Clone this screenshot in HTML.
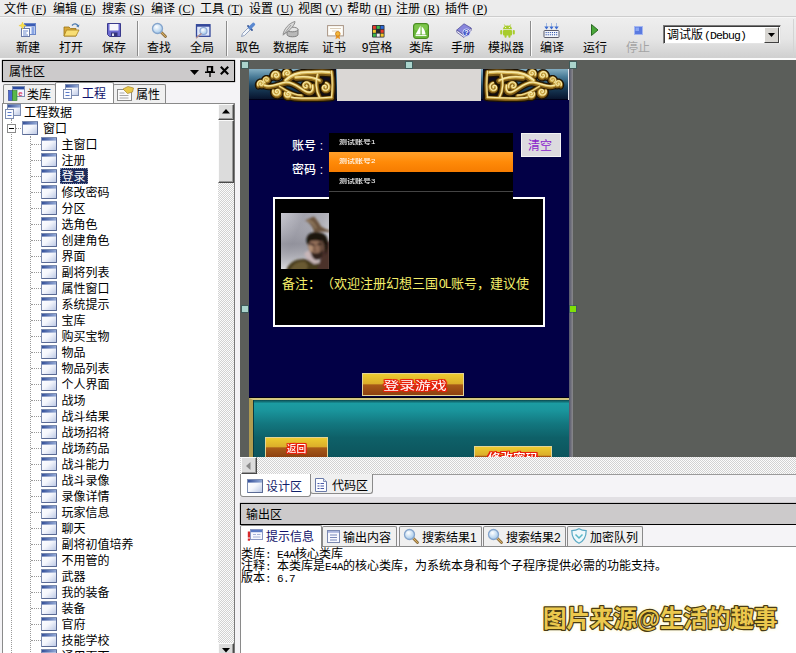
<!DOCTYPE html><html><head><meta charset="utf-8"><title>E4A</title><style>
*{margin:0;padding:0;box-sizing:border-box}
html,body{width:796px;height:653px;overflow:hidden;background:#f0f0f0}
body{position:relative;font-family:"Liberation Sans","Noto Sans CJK SC",sans-serif;font-size:12px;color:#000;line-height:1;text-spacing-trim:space-all;font-weight:400}
.b{font-weight:400}
.a{position:absolute}
.t{position:absolute;white-space:nowrap;line-height:14px;height:14px;margin-top:1px}
.lat{font-family:"Liberation Serif",serif;font-size:12px;letter-spacing:0;margin-left:3.5px;font-weight:400;position:relative;top:-0.5px}
.lat u{text-decoration:underline;text-underline-offset:1px}
.mono{font-family:"Liberation Mono","Noto Sans CJK SC",monospace}
.m{font-family:"Liberation Mono",monospace;font-size:11px;letter-spacing:-0.6px;font-weight:400}
svg{position:absolute;overflow:visible}
.gb{background:linear-gradient(#eecf30 0,#dcae2a 46%,#a85a18 52%,#8a3e10 100%);box-shadow:inset 0 0 0 1px #e4d494}
.gt{color:#fff;font-weight:500;text-shadow:1px 0 0 #e8200c,-1px 0 0 #e8200c,0 1px 0 #e8200c,0 -1px 0 #e8200c,1px 1px 0 #e8200c,-1px -1px 0 #e8200c,1px -1px 0 #e8200c,-1px 1px 0 #e8200c,0 0 2px #e8200c}
</style></head><body>
<svg width="0" height="0" style="left:0;top:0"><defs><linearGradient id="wg" x1="0" y1="0" x2="1" y2="1"><stop offset="0" stop-color="#ffffff"/><stop offset="0.5" stop-color="#f4f6fc"/><stop offset="1" stop-color="#b9c6e4"/></linearGradient><linearGradient id="tb" x1="0" y1="0" x2="1" y2="0"><stop offset="0" stop-color="#34509a"/><stop offset="1" stop-color="#93a9d6"/></linearGradient><linearGradient id="gold" x1="0" y1="0" x2="0" y2="1"><stop offset="0" stop-color="#f6e08a"/><stop offset="0.5" stop-color="#d9b24a"/><stop offset="1" stop-color="#8a6420"/></linearGradient><radialGradient id="glass" cx="0.4" cy="0.35" r="0.7"><stop offset="0" stop-color="#ffffff"/><stop offset="1" stop-color="#9cc4e8"/></radialGradient></defs></svg>
<div class="a" style="left:0;top:0;width:796px;height:17px;background:#ececec;border-bottom:1px solid #cdcdcd"></div>
<div class="t" style="left:4px;top:1px;font-size:12px">文件<span class="lat">(<u>F</u>)</span></div>
<div class="t" style="left:53px;top:1px;font-size:12px">编辑<span class="lat">(<u>E</u>)</span></div>
<div class="t" style="left:102px;top:1px;font-size:12px">搜索<span class="lat">(<u>S</u>)</span></div>
<div class="t" style="left:151px;top:1px;font-size:12px">编译<span class="lat">(<u>C</u>)</span></div>
<div class="t" style="left:200px;top:1px;font-size:12px">工具<span class="lat">(<u>T</u>)</span></div>
<div class="t" style="left:249px;top:1px;font-size:12px">设置<span class="lat">(<u>U</u>)</span></div>
<div class="t" style="left:298px;top:1px;font-size:12px">视图<span class="lat">(<u>V</u>)</span></div>
<div class="t" style="left:347px;top:1px;font-size:12px">帮助<span class="lat">(<u>H</u>)</span></div>
<div class="t" style="left:396px;top:1px;font-size:12px">注册<span class="lat">(<u>R</u>)</span></div>
<div class="t" style="left:445px;top:1px;font-size:12px">插件<span class="lat">(<u>P</u>)</span></div>
<div class="a" style="left:0;top:17px;width:796px;height:42px;background:linear-gradient(#eeeeee,#e6e6e6 50%,#cecece);border-top:1px solid #f6f6f6"></div>
<div class="a" style="left:0;top:58px;width:796px;height:2px;background:#fafafa"></div>
<div class="t b" style="left:-2px;width:60px;text-align:center;top:40px;font-size:12px;color:#000">新建</div>
<div class="t b" style="left:41px;width:60px;text-align:center;top:40px;font-size:12px;color:#000">打开</div>
<div class="t b" style="left:84px;width:60px;text-align:center;top:40px;font-size:12px;color:#000">保存</div>
<div class="t b" style="left:129px;width:60px;text-align:center;top:40px;font-size:12px;color:#000">查找</div>
<div class="t b" style="left:172px;width:60px;text-align:center;top:40px;font-size:12px;color:#000">全局</div>
<div class="t b" style="left:218px;width:60px;text-align:center;top:40px;font-size:12px;color:#000">取色</div>
<div class="t b" style="left:261px;width:60px;text-align:center;top:40px;font-size:12px;color:#000">数据库</div>
<div class="t b" style="left:304px;width:60px;text-align:center;top:40px;font-size:12px;color:#000">证书</div>
<div class="t b" style="left:347px;width:60px;text-align:center;top:40px;font-size:12px;color:#000">9宫格</div>
<div class="t b" style="left:391px;width:60px;text-align:center;top:40px;font-size:12px;color:#000">类库</div>
<div class="t b" style="left:433px;width:60px;text-align:center;top:40px;font-size:12px;color:#000">手册</div>
<div class="t b" style="left:476px;width:60px;text-align:center;top:40px;font-size:12px;color:#000">模拟器</div>
<div class="t b" style="left:522px;width:60px;text-align:center;top:40px;font-size:12px;color:#000">编译</div>
<div class="t b" style="left:565px;width:60px;text-align:center;top:40px;font-size:12px;color:#000">运行</div>
<div class="t b" style="left:608px;width:60px;text-align:center;top:40px;font-size:12px;color:#a4a4a4">停止</div>
<div class="a" style="left:137px;top:21px;width:2px;height:35px;border-left:1px solid #8c8c8c;border-right:1px solid #fafafa"></div>
<div class="a" style="left:226px;top:21px;width:2px;height:35px;border-left:1px solid #8c8c8c;border-right:1px solid #fafafa"></div>
<div class="a" style="left:530px;top:21px;width:2px;height:35px;border-left:1px solid #8c8c8c;border-right:1px solid #fafafa"></div>
<svg style="left:19px;top:22px" width="17" height="16" viewBox="0 0 17 16"><rect x="5.5" y="1.5" width="11" height="11" fill="#eef3fd" stroke="#6a86c8"/><rect x="6" y="2" width="10" height="2.4" fill="#3a5cb4"/><rect x="12.500" y="5" width="3" height="7" fill="#8aa6e4"/><rect x="2.5" y="6.5" width="8" height="8" fill="#ffffff" stroke="#6a7aa8"/><path d="M4 9h5M4 11h3.500M4 13h5" stroke="#5a7ac8" stroke-width="0.9"/><path d="M3.5 0l1 2.6 2.6 1-2.6 1-1 2.6-1-2.6-2.6-1 2.6-1z" fill="#f8e04a" stroke="#e8c020" stroke-width="0.4"/></svg>
<svg style="left:63px;top:22px" width="17" height="16" viewBox="0 0 17 16"><path d="M1 5h5l1.5 1.5H13V14H1z" fill="#d9a93a" stroke="#9a7414" stroke-width="0.8"/><path d="M1 14l2.5-6H16l-3 6z" fill="#f8de74" stroke="#a8821c" stroke-width="0.8"/><path d="M9 3.5c2-2.5 5-2 6 0.5" fill="none" stroke="#4a7ab0" stroke-width="1.3"/><path d="M16.5 2.5l-1 3-2.4-1.6z" fill="#4a7ab0"/></svg>
<svg style="left:106px;top:22px" width="16" height="16" viewBox="0 0 16 16"><path d="M1.5 1.5h13v13h-11l-2-2z" fill="#6c6ad2" stroke="#3a3a8c"/><rect x="3.500" y="2" width="9" height="6.500" fill="#f6f6fc"/><rect x="5" y="10.500" width="6.5" height="4" fill="#34347a"/><rect x="6" y="11.500" width="2" height="2.500" fill="#e0e0f0"/></svg>
<svg style="left:151px;top:22px" width="16" height="16" viewBox="0 0 16 16"><path d="M9.5 9.5l5 5" stroke="#7a5a2a" stroke-width="2.6" stroke-linecap="round"/><path d="M10 10l4.4 4.4" stroke="#d9b268" stroke-width="1.2" stroke-linecap="round"/><circle cx="6.5" cy="6.5" r="5" fill="url(#glass)" stroke="#84a4cc" stroke-width="1.3"/></svg>
<svg style="left:195px;top:23.5px" width="16" height="14" viewBox="0 0 16 14"><rect x="1.500" y="0.700" width="13.500" height="11.600" fill="#dfe8fb" stroke="#34489a" stroke-width="1.3"/><rect x="1.500" y="0.700" width="13.500" height="2" fill="#34489a"/><circle cx="8.500" cy="7" r="3.500" fill="url(#glass)" stroke="#8aa6d4" stroke-width="1.1"/><path d="M6 9.800L1.500 13.800" stroke="#b49090" stroke-width="1.500" stroke-linecap="round"/></svg>
<svg style="left:240px;top:22px" width="16" height="16" viewBox="0 0 16 16"><path d="M1.5 14.5l1-3 6.5-6.5 2 2-6.5 6.5z" fill="#f2f6fc" stroke="#8a9ab8" stroke-width="0.9"/><path d="M8 4l4 4" stroke="#3a5a9a" stroke-width="1.8" stroke-linecap="round"/><path d="M10 5.8l3.4-3.4" stroke="#5a88d0" stroke-width="3.4" stroke-linecap="round"/></svg>
<svg style="left:282px;top:21px" width="17" height="17" viewBox="0 0 17 17"><path d="M5 8.5v5c0 1.4 2.5 2.3 5.5 2.3s5.5-.9 5.5-2.3v-5z" fill="#b9b9b9" stroke="#6a6a6a" stroke-width="0.8"/><ellipse cx="10.5" cy="8.5" rx="5.5" ry="2.3" fill="#e4e4e4" stroke="#6a6a6a" stroke-width="0.8"/><path d="M1 13.5C2 8 7 2 13 0.5c0 3-4 8-10 12z" fill="#d8d8d8" stroke="#7a7a7a" stroke-width="0.8"/><path d="M1 14.5L9 4" stroke="#8a8a8a" stroke-width="0.8"/></svg>
<svg style="left:327px;top:24.5px" width="17" height="15" viewBox="0 0 17 15"><rect x="0.600" y="0.600" width="15.800" height="10.300" fill="#fffefa" stroke="#a89484" stroke-width="1"/><path d="M3 3.500h11M5 6h7" stroke="#d8c8b0" stroke-width="0.9"/><path d="M9.300 9.500l-0.800 4.800 2.300-1.400 2.300 1.400-0.800-4.800z" fill="#e8962a"/><circle cx="10.800" cy="8.800" r="2.300" fill="#f4b83a" stroke="#c87a14" stroke-width="0.8"/></svg>
<svg style="left:372px;top:24.5px" width="13" height="13" viewBox="0 0 13 13"><rect x="0" y="0" width="12.500" height="12.500" rx="1" fill="#2a2e36"/><rect x="0.8" y="0.8" width="3.1" height="3.1" fill="#e83a2a"/><rect x="4.7" y="0.8" width="3.1" height="3.1" fill="#3ab84a"/><rect x="8.6" y="0.8" width="3.1" height="3.1" fill="#2a6ad8"/><rect x="0.8" y="4.7" width="3.1" height="3.1" fill="#f4c82a"/><rect x="4.7" y="4.7" width="3.1" height="3.1" fill="#2a2a2a"/><rect x="8.6" y="4.7" width="3.1" height="3.1" fill="#e83a2a"/><rect x="0.8" y="8.6" width="3.1" height="3.1" fill="#3ab84a"/><rect x="4.7" y="8.6" width="3.1" height="3.1" fill="#f0f0f0"/><rect x="8.6" y="8.6" width="3.1" height="3.1" fill="#f4c82a"/></svg>
<svg style="left:413px;top:22.5px" width="16" height="16" viewBox="0 0 16 16"><rect x="0.5" y="0.5" width="15" height="15" rx="2.500" fill="#66b436" stroke="#4a8a22"/><rect x="1.5" y="1.5" width="13" height="6" rx="2" fill="#86cc52" opacity="0.7"/><path d="M7.500 2.500v9H2.500z" fill="#fff"/><path d="M8.700 3.500c2.500 2 3.600 5 3.900 8H8.700z" fill="#fff"/><path d="M2.500 12.600h11" stroke="#fff" stroke-width="1"/></svg>
<svg style="left:456px;top:23px" width="16" height="15" viewBox="0 0 16 15"><path d="M0.800 7L8 0.800l7.200 4.200-7.200 7.200z" fill="#8886dc" stroke="#55539c" stroke-width="0.8"/><path d="M0.800 7v2.300l7.200 5.200 7.200-7.200V5l-7.200 7.200z" fill="#eeeef8" stroke="#55539c" stroke-width="0.8"/><circle cx="10.500" cy="9.500" r="3.700" fill="#4a5ac8" stroke="#e4e8ff" stroke-width="0.8"/><text x="10.500" y="12.100" font-size="7" font-weight="700" text-anchor="middle" fill="#fff" font-family="Liberation Sans,sans-serif">?</text></svg>
<svg style="left:499px;top:24px" width="17" height="14" viewBox="0 0 17 14"><path d="M4 5.200a4.500 3.800 0 0 1 9 0z" fill="#a8cc2c"/><path d="M5.300 0.500l1.100 1.800M11.700 0.500L10.600 2.300" stroke="#a8cc2c" stroke-width="0.9"/><rect x="4" y="5.900" width="9" height="5.600" rx="0.900" fill="#a8cc2c"/><rect x="1.200" y="5.900" width="2.100" height="4.600" rx="1" fill="#a8cc2c"/><rect x="13.700" y="5.900" width="2.100" height="4.600" rx="1" fill="#a8cc2c"/><rect x="5.500" y="10.500" width="2.100" height="3.300" rx="1" fill="#a8cc2c"/><rect x="9.400" y="10.500" width="2.100" height="3.300" rx="1" fill="#a8cc2c"/><circle cx="6.600" cy="3.500" r="0.600" fill="#fff"/><circle cx="10.400" cy="3.500" r="0.600" fill="#fff"/></svg>
<svg style="left:543px;top:23px" width="17" height="15" viewBox="0 0 17 15"><rect x="1" y="7.5" width="15" height="7" rx="0.8" fill="#f4f6fa" stroke="#5a5a6a" stroke-width="1"/><rect x="2.6" y="9.0" width="1.1" height="1.1" fill="#3a5ab0"/><rect x="4.7" y="9.0" width="1.1" height="1.1" fill="#3a5ab0"/><rect x="6.8" y="9.0" width="1.1" height="1.1" fill="#3a5ab0"/><rect x="8.9" y="9.0" width="1.1" height="1.1" fill="#3a5ab0"/><rect x="11.0" y="9.0" width="1.1" height="1.1" fill="#3a5ab0"/><rect x="13.1" y="9.0" width="1.1" height="1.1" fill="#3a5ab0"/><rect x="2.6" y="11.2" width="1.1" height="1.1" fill="#3a5ab0"/><rect x="4.7" y="11.2" width="1.1" height="1.1" fill="#3a5ab0"/><rect x="6.8" y="11.2" width="1.1" height="1.1" fill="#3a5ab0"/><rect x="8.9" y="11.2" width="1.1" height="1.1" fill="#3a5ab0"/><rect x="11.0" y="11.2" width="1.1" height="1.1" fill="#3a5ab0"/><rect x="13.1" y="11.2" width="1.1" height="1.1" fill="#3a5ab0"/><path d="M3.5 0.500v3" stroke="#5a8ad8" stroke-width="1" stroke-dasharray="1 1"/><path d="M1.2999999999999998 3.500h4.400L3.5 6.500z" fill="#3a6ad0"/><path d="M8.5 0.500v3" stroke="#5a8ad8" stroke-width="1" stroke-dasharray="1 1"/><path d="M6.3 3.500h4.400L8.5 6.500z" fill="#3a6ad0"/><path d="M13.5 0.500v3" stroke="#5a8ad8" stroke-width="1" stroke-dasharray="1 1"/><path d="M11.3 3.500h4.400L13.5 6.500z" fill="#3a6ad0"/></svg>
<svg style="left:591px;top:24px" width="8" height="12" viewBox="0 0 8 12"><path d="M0.5 0.5l6.500 5.500-6.500 5.500z" fill="#4aa83a" stroke="#2a6a22" stroke-width="1"/></svg>
<svg style="left:634px;top:26px" width="9" height="9" viewBox="0 0 9 9"><rect x="0.5" y="0.5" width="8" height="8" fill="#5a7ae0" stroke="#a4b6f0"/><rect x="1.5" y="1.5" width="3.500" height="3.500" fill="#8aa6f4"/></svg>
<div class="a" style="left:663px;top:25px;width:118px;height:19px;background:#fff;border:1px solid #7a7a7a;border-right-color:#e4e4e4;border-bottom-color:#e4e4e4;box-shadow:inset 1px 1px 0 #3a3a3a"></div>
<div class="t" style="left:667px;top:27px;font-size:12px">调试版<span class="m" style="margin-left:1px;font-size:11.5px;letter-spacing:-0.9px">(Debug)</span></div>
<div class="a" style="left:764px;top:27px;width:15px;height:16px;background:#d8d6d2;border:1px solid #fff;border-right-color:#404040;border-bottom-color:#404040"></div>
<svg style="left:768px;top:33px" width="8" height="5"><path d="M0 0h7L3.5 4z" fill="#000"/></svg>
<div class="a" style="left:793px;top:19px;width:1px;height:38px;background:#d4d4d4"></div>
<div class="a" style="left:0;top:60px;width:240px;height:593px;background:#f4f3f6"></div>
<div class="a" style="left:2px;top:60px;width:233px;height:22px;background:#cccacb;border:1px solid #000;box-shadow:0 0 1px #444"></div>
<div class="t" style="left:9px;top:64px;font-size:12px">属性区</div>
<svg style="left:190px;top:70px" width="9" height="5"><path d="M0 0h9L4.5 5z" fill="#000"/></svg>
<svg style="left:205px;top:66px" width="10" height="11"><path d="M2.5 0.7h5v5h-5zM0 6.200h10M5 6.200V11" fill="none" stroke="#000" stroke-width="1.4"/><path d="M6.500 1v5" stroke="#000" stroke-width="1.200"/></svg>
<svg style="left:220px;top:66px" width="9" height="9"><path d="M0.800 0.800l7.400 7.400M8.200 0.800l-7.400 7.400" stroke="#000" stroke-width="2.100"/></svg>
<div class="a" style="left:3px;top:84px;width:53px;height:20px;background:#f0f0f0;border:1px solid #8a8a8a;border-bottom:none;border-radius:2px 2px 0 0"></div>
<div class="a" style="left:113px;top:84px;width:53px;height:20px;background:#f0f0f0;border:1px solid #8a8a8a;border-bottom:none;border-radius:2px 2px 0 0"></div>
<div class="a" style="left:55px;top:82px;width:59px;height:23px;background:#fff;border:1px solid #8a8a8a;border-bottom:none;border-radius:2px 2px 0 0"></div>
<svg style="left:8px;top:86px" width="17" height="15" viewBox="0 0 17 15"><rect x="4.5" y="0.5" width="12" height="10" fill="#f4f6ff" stroke="#7c8cb0"/><rect x="5" y="1" width="11" height="2.4" fill="#2a4aa0"/><rect x="0.5" y="4.500" width="4" height="10" fill="#4a6ad0" stroke="#2a3a8a" stroke-width="0.6"/><rect x="4.5" y="4.5" width="4.500" height="10" fill="#5ab84a" stroke="#2a7a2a" stroke-width="0.6"/><text x="12.5" y="9.5" font-size="8" font-weight="700" text-anchor="middle" fill="#d83a5a" font-family="Liberation Sans,sans-serif">e</text></svg>
<svg style="left:63px;top:84px" width="16" height="15" viewBox="0 0 16 15"><rect x="2.5" y="0.5" width="13" height="11" fill="url(#wg)" stroke="#7c8cb0"/><rect x="3" y="1" width="12" height="2.6" fill="url(#tb)"/><rect x="0.5" y="5.5" width="8" height="9" fill="#fafbff" stroke="#7c8cb0"/><path d="M2.500 8.500h4M2.500 11.500h4" stroke="#5a7ac8" stroke-width="1"/></svg>
<svg style="left:117px;top:86px" width="17" height="15" viewBox="0 0 17 15"><rect x="0.5" y="3.5" width="14" height="11" fill="#fbfbfb" stroke="#8a8a8a"/><path d="M2.5 7h5M2.500 9.500h9M2.500 12h9" stroke="#a8a8a8"/><path d="M6 3l5-2.500 5.500 1.500-1 4-5 1.500z" fill="#e8c84a" stroke="#a8862a" stroke-width="0.7"/></svg>
<div class="t" style="left:27px;top:87px">类库</div>
<div class="t" style="left:82px;top:86px;color:#10106a">工程</div>
<div class="t" style="left:136px;top:87px">属性</div>
<div class="a" style="left:2px;top:103px;width:216px;height:550px;background:#fff;border-left:1px solid #8a8a8a;border-top:1px solid #8a8a8a;overflow:hidden;font-weight:400" id="tree">
<svg style="left:2px;top:0px" width="16" height="15" viewBox="0 0 16 15"><rect x="2.5" y="0.5" width="13" height="11" fill="url(#wg)" stroke="#7c8cb0"/><rect x="3" y="1" width="12" height="2.6" fill="url(#tb)"/><rect x="0.5" y="5.5" width="8" height="9" fill="#fafbff" stroke="#7c8cb0"/><path d="M2.500 8.500h4M2.500 11.500h4" stroke="#5a7ac8" stroke-width="1"/></svg>
<div class="t" style="left:21px;top:1px">工程数据</div>
<div class="a" style="left:8px;top:15px;width:0;height:540px;border-left:1px dotted #9a9a9a"></div>
<div class="a" style="left:27px;top:32px;width:0;height:540px;border-left:1px dotted #9a9a9a"></div>
<div class="a" style="left:13px;top:24px;width:7px;height:0;border-top:1px dotted #9a9a9a"></div>
<div class="a" style="left:4px;top:20px;width:9px;height:9px;background:#fff;border:1px solid #8a8a8a"></div><div class="a" style="left:6px;top:24px;width:5px;height:1px;background:#000"></div>
<svg style="left:19px;top:17px" width="16" height="14" viewBox="0 0 16 14"><rect x="0.5" y="0.5" width="15" height="13" fill="url(#wg)" stroke="#7c8cb0"/><rect x="1" y="1" width="14" height="2.6" fill="url(#tb)"/><path d="M15.5 1V13.5H1" fill="none" stroke="#5a6a94" stroke-width="1"/></svg>
<div class="t" style="left:40px;top:17px">窗口</div>
<div class="a" style="left:28px;top:40px;width:10px;height:0;border-top:1px dotted #9a9a9a"></div>
<svg style="left:38px;top:33px" width="16" height="14" viewBox="0 0 16 14"><rect x="0.5" y="0.5" width="15" height="13" fill="url(#wg)" stroke="#7c8cb0"/><rect x="1" y="1" width="14" height="2.6" fill="url(#tb)"/><path d="M15.5 1V13.5H1" fill="none" stroke="#5a6a94" stroke-width="1"/></svg>
<div class="t" style="left:58.5px;top:33px">主窗口</div>
<div class="a" style="left:28px;top:56px;width:10px;height:0;border-top:1px dotted #9a9a9a"></div>
<svg style="left:38px;top:49px" width="16" height="14" viewBox="0 0 16 14"><rect x="0.5" y="0.5" width="15" height="13" fill="url(#wg)" stroke="#7c8cb0"/><rect x="1" y="1" width="14" height="2.6" fill="url(#tb)"/><path d="M15.5 1V13.5H1" fill="none" stroke="#5a6a94" stroke-width="1"/></svg>
<div class="t" style="left:58.5px;top:49px">注册</div>
<div class="a" style="left:28px;top:72px;width:10px;height:0;border-top:1px dotted #9a9a9a"></div>
<svg style="left:38px;top:65px" width="16" height="14" viewBox="0 0 16 14"><rect x="0.5" y="0.5" width="15" height="13" fill="url(#wg)" stroke="#7c8cb0"/><rect x="1" y="1" width="14" height="2.6" fill="url(#tb)"/><path d="M15.5 1V13.5H1" fill="none" stroke="#5a6a94" stroke-width="1"/></svg>
<div class="a" style="left:57px;top:64px;width:28px;height:16px;background:#1c2a5a;border:1px dotted #7a86a8"></div>
<div class="t" style="left:58.5px;top:65px;color:#fff">登录</div>
<div class="a" style="left:28px;top:88px;width:10px;height:0;border-top:1px dotted #9a9a9a"></div>
<svg style="left:38px;top:81px" width="16" height="14" viewBox="0 0 16 14"><rect x="0.5" y="0.5" width="15" height="13" fill="url(#wg)" stroke="#7c8cb0"/><rect x="1" y="1" width="14" height="2.6" fill="url(#tb)"/><path d="M15.5 1V13.5H1" fill="none" stroke="#5a6a94" stroke-width="1"/></svg>
<div class="t" style="left:58.5px;top:81px">修改密码</div>
<div class="a" style="left:28px;top:104px;width:10px;height:0;border-top:1px dotted #9a9a9a"></div>
<svg style="left:38px;top:97px" width="16" height="14" viewBox="0 0 16 14"><rect x="0.5" y="0.5" width="15" height="13" fill="url(#wg)" stroke="#7c8cb0"/><rect x="1" y="1" width="14" height="2.6" fill="url(#tb)"/><path d="M15.5 1V13.5H1" fill="none" stroke="#5a6a94" stroke-width="1"/></svg>
<div class="t" style="left:58.5px;top:97px">分区</div>
<div class="a" style="left:28px;top:120px;width:10px;height:0;border-top:1px dotted #9a9a9a"></div>
<svg style="left:38px;top:113px" width="16" height="14" viewBox="0 0 16 14"><rect x="0.5" y="0.5" width="15" height="13" fill="url(#wg)" stroke="#7c8cb0"/><rect x="1" y="1" width="14" height="2.6" fill="url(#tb)"/><path d="M15.5 1V13.5H1" fill="none" stroke="#5a6a94" stroke-width="1"/></svg>
<div class="t" style="left:58.5px;top:113px">选角色</div>
<div class="a" style="left:28px;top:136px;width:10px;height:0;border-top:1px dotted #9a9a9a"></div>
<svg style="left:38px;top:129px" width="16" height="14" viewBox="0 0 16 14"><rect x="0.5" y="0.5" width="15" height="13" fill="url(#wg)" stroke="#7c8cb0"/><rect x="1" y="1" width="14" height="2.6" fill="url(#tb)"/><path d="M15.5 1V13.5H1" fill="none" stroke="#5a6a94" stroke-width="1"/></svg>
<div class="t" style="left:58.5px;top:129px">创建角色</div>
<div class="a" style="left:28px;top:152px;width:10px;height:0;border-top:1px dotted #9a9a9a"></div>
<svg style="left:38px;top:145px" width="16" height="14" viewBox="0 0 16 14"><rect x="0.5" y="0.5" width="15" height="13" fill="url(#wg)" stroke="#7c8cb0"/><rect x="1" y="1" width="14" height="2.6" fill="url(#tb)"/><path d="M15.5 1V13.5H1" fill="none" stroke="#5a6a94" stroke-width="1"/></svg>
<div class="t" style="left:58.5px;top:145px">界面</div>
<div class="a" style="left:28px;top:168px;width:10px;height:0;border-top:1px dotted #9a9a9a"></div>
<svg style="left:38px;top:161px" width="16" height="14" viewBox="0 0 16 14"><rect x="0.5" y="0.5" width="15" height="13" fill="url(#wg)" stroke="#7c8cb0"/><rect x="1" y="1" width="14" height="2.6" fill="url(#tb)"/><path d="M15.5 1V13.5H1" fill="none" stroke="#5a6a94" stroke-width="1"/></svg>
<div class="t" style="left:58.5px;top:161px">副将列表</div>
<div class="a" style="left:28px;top:184px;width:10px;height:0;border-top:1px dotted #9a9a9a"></div>
<svg style="left:38px;top:177px" width="16" height="14" viewBox="0 0 16 14"><rect x="0.5" y="0.5" width="15" height="13" fill="url(#wg)" stroke="#7c8cb0"/><rect x="1" y="1" width="14" height="2.6" fill="url(#tb)"/><path d="M15.5 1V13.5H1" fill="none" stroke="#5a6a94" stroke-width="1"/></svg>
<div class="t" style="left:58.5px;top:177px">属性窗口</div>
<div class="a" style="left:28px;top:200px;width:10px;height:0;border-top:1px dotted #9a9a9a"></div>
<svg style="left:38px;top:193px" width="16" height="14" viewBox="0 0 16 14"><rect x="0.5" y="0.5" width="15" height="13" fill="url(#wg)" stroke="#7c8cb0"/><rect x="1" y="1" width="14" height="2.6" fill="url(#tb)"/><path d="M15.5 1V13.5H1" fill="none" stroke="#5a6a94" stroke-width="1"/></svg>
<div class="t" style="left:58.5px;top:193px">系统提示</div>
<div class="a" style="left:28px;top:216px;width:10px;height:0;border-top:1px dotted #9a9a9a"></div>
<svg style="left:38px;top:209px" width="16" height="14" viewBox="0 0 16 14"><rect x="0.5" y="0.5" width="15" height="13" fill="url(#wg)" stroke="#7c8cb0"/><rect x="1" y="1" width="14" height="2.6" fill="url(#tb)"/><path d="M15.5 1V13.5H1" fill="none" stroke="#5a6a94" stroke-width="1"/></svg>
<div class="t" style="left:58.5px;top:209px">宝库</div>
<div class="a" style="left:28px;top:232px;width:10px;height:0;border-top:1px dotted #9a9a9a"></div>
<svg style="left:38px;top:225px" width="16" height="14" viewBox="0 0 16 14"><rect x="0.5" y="0.5" width="15" height="13" fill="url(#wg)" stroke="#7c8cb0"/><rect x="1" y="1" width="14" height="2.6" fill="url(#tb)"/><path d="M15.5 1V13.5H1" fill="none" stroke="#5a6a94" stroke-width="1"/></svg>
<div class="t" style="left:58.5px;top:225px">购买宝物</div>
<div class="a" style="left:28px;top:248px;width:10px;height:0;border-top:1px dotted #9a9a9a"></div>
<svg style="left:38px;top:241px" width="16" height="14" viewBox="0 0 16 14"><rect x="0.5" y="0.5" width="15" height="13" fill="url(#wg)" stroke="#7c8cb0"/><rect x="1" y="1" width="14" height="2.6" fill="url(#tb)"/><path d="M15.5 1V13.5H1" fill="none" stroke="#5a6a94" stroke-width="1"/></svg>
<div class="t" style="left:58.5px;top:241px">物品</div>
<div class="a" style="left:28px;top:264px;width:10px;height:0;border-top:1px dotted #9a9a9a"></div>
<svg style="left:38px;top:257px" width="16" height="14" viewBox="0 0 16 14"><rect x="0.5" y="0.5" width="15" height="13" fill="url(#wg)" stroke="#7c8cb0"/><rect x="1" y="1" width="14" height="2.6" fill="url(#tb)"/><path d="M15.5 1V13.5H1" fill="none" stroke="#5a6a94" stroke-width="1"/></svg>
<div class="t" style="left:58.5px;top:257px">物品列表</div>
<div class="a" style="left:28px;top:280px;width:10px;height:0;border-top:1px dotted #9a9a9a"></div>
<svg style="left:38px;top:273px" width="16" height="14" viewBox="0 0 16 14"><rect x="0.5" y="0.5" width="15" height="13" fill="url(#wg)" stroke="#7c8cb0"/><rect x="1" y="1" width="14" height="2.6" fill="url(#tb)"/><path d="M15.5 1V13.5H1" fill="none" stroke="#5a6a94" stroke-width="1"/></svg>
<div class="t" style="left:58.5px;top:273px">个人界面</div>
<div class="a" style="left:28px;top:296px;width:10px;height:0;border-top:1px dotted #9a9a9a"></div>
<svg style="left:38px;top:289px" width="16" height="14" viewBox="0 0 16 14"><rect x="0.5" y="0.5" width="15" height="13" fill="url(#wg)" stroke="#7c8cb0"/><rect x="1" y="1" width="14" height="2.6" fill="url(#tb)"/><path d="M15.5 1V13.5H1" fill="none" stroke="#5a6a94" stroke-width="1"/></svg>
<div class="t" style="left:58.5px;top:289px">战场</div>
<div class="a" style="left:28px;top:312px;width:10px;height:0;border-top:1px dotted #9a9a9a"></div>
<svg style="left:38px;top:305px" width="16" height="14" viewBox="0 0 16 14"><rect x="0.5" y="0.5" width="15" height="13" fill="url(#wg)" stroke="#7c8cb0"/><rect x="1" y="1" width="14" height="2.6" fill="url(#tb)"/><path d="M15.5 1V13.5H1" fill="none" stroke="#5a6a94" stroke-width="1"/></svg>
<div class="t" style="left:58.5px;top:305px">战斗结果</div>
<div class="a" style="left:28px;top:328px;width:10px;height:0;border-top:1px dotted #9a9a9a"></div>
<svg style="left:38px;top:321px" width="16" height="14" viewBox="0 0 16 14"><rect x="0.5" y="0.5" width="15" height="13" fill="url(#wg)" stroke="#7c8cb0"/><rect x="1" y="1" width="14" height="2.6" fill="url(#tb)"/><path d="M15.5 1V13.5H1" fill="none" stroke="#5a6a94" stroke-width="1"/></svg>
<div class="t" style="left:58.5px;top:321px">战场招将</div>
<div class="a" style="left:28px;top:344px;width:10px;height:0;border-top:1px dotted #9a9a9a"></div>
<svg style="left:38px;top:337px" width="16" height="14" viewBox="0 0 16 14"><rect x="0.5" y="0.5" width="15" height="13" fill="url(#wg)" stroke="#7c8cb0"/><rect x="1" y="1" width="14" height="2.6" fill="url(#tb)"/><path d="M15.5 1V13.5H1" fill="none" stroke="#5a6a94" stroke-width="1"/></svg>
<div class="t" style="left:58.5px;top:337px">战场药品</div>
<div class="a" style="left:28px;top:360px;width:10px;height:0;border-top:1px dotted #9a9a9a"></div>
<svg style="left:38px;top:353px" width="16" height="14" viewBox="0 0 16 14"><rect x="0.5" y="0.5" width="15" height="13" fill="url(#wg)" stroke="#7c8cb0"/><rect x="1" y="1" width="14" height="2.6" fill="url(#tb)"/><path d="M15.5 1V13.5H1" fill="none" stroke="#5a6a94" stroke-width="1"/></svg>
<div class="t" style="left:58.5px;top:353px">战斗能力</div>
<div class="a" style="left:28px;top:376px;width:10px;height:0;border-top:1px dotted #9a9a9a"></div>
<svg style="left:38px;top:369px" width="16" height="14" viewBox="0 0 16 14"><rect x="0.5" y="0.5" width="15" height="13" fill="url(#wg)" stroke="#7c8cb0"/><rect x="1" y="1" width="14" height="2.6" fill="url(#tb)"/><path d="M15.5 1V13.5H1" fill="none" stroke="#5a6a94" stroke-width="1"/></svg>
<div class="t" style="left:58.5px;top:369px">战斗录像</div>
<div class="a" style="left:28px;top:392px;width:10px;height:0;border-top:1px dotted #9a9a9a"></div>
<svg style="left:38px;top:385px" width="16" height="14" viewBox="0 0 16 14"><rect x="0.5" y="0.5" width="15" height="13" fill="url(#wg)" stroke="#7c8cb0"/><rect x="1" y="1" width="14" height="2.6" fill="url(#tb)"/><path d="M15.5 1V13.5H1" fill="none" stroke="#5a6a94" stroke-width="1"/></svg>
<div class="t" style="left:58.5px;top:385px">录像详情</div>
<div class="a" style="left:28px;top:408px;width:10px;height:0;border-top:1px dotted #9a9a9a"></div>
<svg style="left:38px;top:401px" width="16" height="14" viewBox="0 0 16 14"><rect x="0.5" y="0.5" width="15" height="13" fill="url(#wg)" stroke="#7c8cb0"/><rect x="1" y="1" width="14" height="2.6" fill="url(#tb)"/><path d="M15.5 1V13.5H1" fill="none" stroke="#5a6a94" stroke-width="1"/></svg>
<div class="t" style="left:58.5px;top:401px">玩家信息</div>
<div class="a" style="left:28px;top:424px;width:10px;height:0;border-top:1px dotted #9a9a9a"></div>
<svg style="left:38px;top:417px" width="16" height="14" viewBox="0 0 16 14"><rect x="0.5" y="0.5" width="15" height="13" fill="url(#wg)" stroke="#7c8cb0"/><rect x="1" y="1" width="14" height="2.6" fill="url(#tb)"/><path d="M15.5 1V13.5H1" fill="none" stroke="#5a6a94" stroke-width="1"/></svg>
<div class="t" style="left:58.5px;top:417px">聊天</div>
<div class="a" style="left:28px;top:440px;width:10px;height:0;border-top:1px dotted #9a9a9a"></div>
<svg style="left:38px;top:433px" width="16" height="14" viewBox="0 0 16 14"><rect x="0.5" y="0.5" width="15" height="13" fill="url(#wg)" stroke="#7c8cb0"/><rect x="1" y="1" width="14" height="2.6" fill="url(#tb)"/><path d="M15.5 1V13.5H1" fill="none" stroke="#5a6a94" stroke-width="1"/></svg>
<div class="t" style="left:58.5px;top:433px">副将初值培养</div>
<div class="a" style="left:28px;top:456px;width:10px;height:0;border-top:1px dotted #9a9a9a"></div>
<svg style="left:38px;top:449px" width="16" height="14" viewBox="0 0 16 14"><rect x="0.5" y="0.5" width="15" height="13" fill="url(#wg)" stroke="#7c8cb0"/><rect x="1" y="1" width="14" height="2.6" fill="url(#tb)"/><path d="M15.5 1V13.5H1" fill="none" stroke="#5a6a94" stroke-width="1"/></svg>
<div class="t" style="left:58.5px;top:449px">不用管的</div>
<div class="a" style="left:28px;top:472px;width:10px;height:0;border-top:1px dotted #9a9a9a"></div>
<svg style="left:38px;top:465px" width="16" height="14" viewBox="0 0 16 14"><rect x="0.5" y="0.5" width="15" height="13" fill="url(#wg)" stroke="#7c8cb0"/><rect x="1" y="1" width="14" height="2.6" fill="url(#tb)"/><path d="M15.5 1V13.5H1" fill="none" stroke="#5a6a94" stroke-width="1"/></svg>
<div class="t" style="left:58.5px;top:465px">武器</div>
<div class="a" style="left:28px;top:488px;width:10px;height:0;border-top:1px dotted #9a9a9a"></div>
<svg style="left:38px;top:481px" width="16" height="14" viewBox="0 0 16 14"><rect x="0.5" y="0.5" width="15" height="13" fill="url(#wg)" stroke="#7c8cb0"/><rect x="1" y="1" width="14" height="2.6" fill="url(#tb)"/><path d="M15.5 1V13.5H1" fill="none" stroke="#5a6a94" stroke-width="1"/></svg>
<div class="t" style="left:58.5px;top:481px">我的装备</div>
<div class="a" style="left:28px;top:504px;width:10px;height:0;border-top:1px dotted #9a9a9a"></div>
<svg style="left:38px;top:497px" width="16" height="14" viewBox="0 0 16 14"><rect x="0.5" y="0.5" width="15" height="13" fill="url(#wg)" stroke="#7c8cb0"/><rect x="1" y="1" width="14" height="2.6" fill="url(#tb)"/><path d="M15.5 1V13.5H1" fill="none" stroke="#5a6a94" stroke-width="1"/></svg>
<div class="t" style="left:58.5px;top:497px">装备</div>
<div class="a" style="left:28px;top:520px;width:10px;height:0;border-top:1px dotted #9a9a9a"></div>
<svg style="left:38px;top:513px" width="16" height="14" viewBox="0 0 16 14"><rect x="0.5" y="0.5" width="15" height="13" fill="url(#wg)" stroke="#7c8cb0"/><rect x="1" y="1" width="14" height="2.6" fill="url(#tb)"/><path d="M15.5 1V13.5H1" fill="none" stroke="#5a6a94" stroke-width="1"/></svg>
<div class="t" style="left:58.5px;top:513px">官府</div>
<div class="a" style="left:28px;top:536px;width:10px;height:0;border-top:1px dotted #9a9a9a"></div>
<svg style="left:38px;top:529px" width="16" height="14" viewBox="0 0 16 14"><rect x="0.5" y="0.5" width="15" height="13" fill="url(#wg)" stroke="#7c8cb0"/><rect x="1" y="1" width="14" height="2.6" fill="url(#tb)"/><path d="M15.5 1V13.5H1" fill="none" stroke="#5a6a94" stroke-width="1"/></svg>
<div class="t" style="left:58.5px;top:529px">技能学校</div>
<div class="a" style="left:28px;top:552px;width:10px;height:0;border-top:1px dotted #9a9a9a"></div>
<svg style="left:38px;top:545px" width="16" height="14" viewBox="0 0 16 14"><rect x="0.5" y="0.5" width="15" height="13" fill="url(#wg)" stroke="#7c8cb0"/><rect x="1" y="1" width="14" height="2.6" fill="url(#tb)"/><path d="M15.5 1V13.5H1" fill="none" stroke="#5a6a94" stroke-width="1"/></svg>
<div class="t" style="left:58.5px;top:545px">通用页面</div>
</div>
<div class="a" style="left:218px;top:104px;width:16px;height:549px;background-color:#f2f2f2;background-image:repeating-conic-gradient(#d2d2d2 0 25%,#fcfcfc 0 50%);background-size:2px 2px"></div>
<div class="a" style="left:218px;top:103px;width:17px;height:1px;background:#8a8a8a"></div>
<div class="a" style="left:218px;top:104px;width:16px;height:16px;background:#dcdcdc;border:1px solid #fbfbfb;border-right-color:#4a4a4a;border-bottom-color:#4a4a4a;box-shadow:inset -1px -1px 0 #9a9a9a"></div>
<svg style="left:222px;top:109px" width="8" height="5"><path d="M0 4.500h8L4 0z" fill="#000"/></svg>
<div class="a" style="left:218px;top:120px;width:16px;height:63px;background:#dcdcdc;border:1px solid #fbfbfb;border-right-color:#4a4a4a;border-bottom-color:#4a4a4a;box-shadow:inset -1px -1px 0 #9a9a9a"></div>
<div class="a" style="left:218px;top:643px;width:16px;height:16px;background:#dcdcdc;border:1px solid #fbfbfb;border-right-color:#4a4a4a;border-bottom-color:#4a4a4a;box-shadow:inset -1px -1px 0 #9a9a9a"></div>
<svg style="left:222px;top:648px" width="8" height="5"><path d="M0 0h8L4 4.500z" fill="#000"/></svg>
<div class="a" style="left:234px;top:104px;width:1px;height:549px;background:#7a7a7a"></div>
<div class="a" style="left:240px;top:60px;width:556px;height:398px;background:#5b5e5a"></div>
<div class="a" style="left:569px;top:69px;width:4px;height:389px;background:linear-gradient(90deg,#55566c,#8a8a8c)"></div>
<div class="a" style="left:249px;top:69px;width:320px;height:389px;background:#020046;overflow:hidden" id="form">
<div class="a" style="position:absolute;left:0px;top:0px;width:320px;height:31px;background:linear-gradient(#84aec2,#4a7c98 25%,#1c4460 55%,#06102a)"></div>
<div class="a" style="position:absolute;left:0px;top:30px;width:320px;height:1px;background:#000018"></div>
<div class="a" style="position:absolute;left:88px;top:0px;width:144px;height:32px;background:#dad7d5"></div>
<div class="a" style="position:absolute;left:319px;top:0px;width:1px;height:31px;background:#e8e8f0"></div>
<svg style="left:7px;top:0px" width="80" height="31" viewBox="0 0 80 31"><g id="orn"><g fill="none" stroke-linecap="round" stroke-linejoin="round"><path d="M46 0H80V31H38C50 24 54 10 46 0z" fill="#0e0c20" stroke="none"/><path d="M2.4 17.3 L2.1 16.3 L2.1 15.3 L2.4 14.4 L3.0 13.6 L3.7 13.0 L4.5 12.7 L5.4 12.7 L6.2 12.9 L6.8 13.3 L7.3 13.8 L7.7 14.5 L7.7 15.2 L7.6 15.8 L7.4 16.4 L6.9 16.8 L6.5 17.1 L5.9 17.2 L5.4 17.1 L5.0 16.9 L4.7 16.6 L4.5 16.3 L4.4 15.9 L4.4 15.6 L4.6 15.3 L4.8 15.1 L5.0 15.0 L5.2 15.0 L5.4 15.0" stroke="#1c1204" stroke-width="6.6"/><path d="M9.3 14.4 L8.6 13.8 L8.2 13.0 L8.0 12.2 L8.0 11.4 L8.3 10.6 L8.7 9.9 L9.3 9.5 L9.9 9.2 L10.6 9.1 L11.3 9.2 L11.9 9.4 L12.3 9.8 L12.7 10.3 L12.8 10.8 L12.8 11.4 L12.7 11.8 L12.5 12.2 L12.1 12.5 L11.7 12.7 L11.4 12.8 L11.0 12.7 L10.7 12.6 L10.5 12.4 L10.3 12.1 L10.3 11.9 L10.3 11.6 L10.4 11.5 L10.5 11.3" stroke="#1c1204" stroke-width="6.4"/><path d="M16.6 8.4 L16.4 7.2 L16.7 6.0 L17.3 5.0 L18.1 4.2 L19.0 3.8 L20.1 3.6 L21.1 3.8 L21.9 4.2 L22.6 4.8 L23.0 5.6 L23.2 6.5 L23.1 7.3 L22.8 8.0 L22.3 8.5 L21.7 8.9 L21.1 9.0 L20.5 9.0 L19.9 8.7 L19.5 8.4 L19.3 7.9 L19.2 7.5 L19.2 7.1 L19.4 6.7 L19.6 6.5 L19.9 6.3 L20.2 6.3 L20.4 6.4 L20.6 6.5" stroke="#1c1204" stroke-width="7.0"/><path d="M28.2 6.9 L27.9 5.8 L27.9 4.8 L28.3 3.8 L28.8 3.0 L29.6 2.4 L30.5 2.1 L31.4 2.0 L32.2 2.2 L32.9 2.7 L33.4 3.2 L33.8 3.9 L33.9 4.6 L33.7 5.3 L33.4 5.9 L33.0 6.4 L32.5 6.6 L32.0 6.7 L31.4 6.7 L31.0 6.5 L30.7 6.2 L30.4 5.8 L30.4 5.4 L30.4 5.1 L30.6 4.8 L30.8 4.6 L31.0 4.5 L31.2 4.4 L31.4 4.5" stroke="#1c1204" stroke-width="6.8"/><path d="M17.6 22.1 L17.4 23.3 L17.7 24.6 L18.3 25.6 L19.2 26.4 L20.2 26.8 L21.3 26.9 L22.3 26.7 L23.2 26.1 L23.8 25.4 L24.2 24.6 L24.2 23.7 L24.0 22.9 L23.6 22.2 L23.0 21.7 L22.3 21.4 L21.7 21.4 L21.0 21.6 L20.6 21.9 L20.2 22.4 L20.1 22.9 L20.1 23.4 L20.2 23.8 L20.5 24.1 L20.8 24.3 L21.1 24.3 L21.4 24.3 L21.6 24.1 L21.8 23.9" stroke="#1c1204" stroke-width="7.0"/><path d="M29.4 24.2 L29.1 25.2 L29.1 26.3 L29.5 27.3 L30.1 28.0 L30.9 28.6 L31.7 28.8 L32.6 28.8 L33.4 28.6 L34.1 28.1 L34.5 27.4 L34.8 26.7 L34.8 26.0 L34.6 25.4 L34.2 24.8 L33.7 24.5 L33.1 24.3 L32.6 24.3 L32.1 24.4 L31.7 24.7 L31.4 25.1 L31.3 25.5 L31.3 25.9 L31.5 26.2 L31.7 26.5 L31.9 26.6 L32.2 26.7 L32.4 26.6 L32.6 26.5" stroke="#1c1204" stroke-width="6.8"/><path d="M9 17 C16 20 22 15 30 14 S44 20 50 23 S58 22 57 17" stroke="#1c1204" stroke-width="7.2"/><path d="M54.8 19.1 L54.9 17.8 L54.7 16.6 L54.2 15.6 L53.4 14.8 L52.5 14.2 L51.5 13.9 L50.5 13.9 L49.6 14.2 L48.8 14.7 L48.2 15.4 L47.8 16.1 L47.7 16.9 L47.8 17.7 L48.1 18.4 L48.5 18.9 L49.1 19.3 L49.7 19.4 L50.3 19.4 L50.8 19.3 L51.2 19.0 L51.5 18.7 L51.6 18.3 L51.7 17.9 L51.6 17.6 L51.4 17.3 L51.2 17.1 L51.0 17.0 L50.8 17.1" stroke="#1c1204" stroke-width="6.6"/><path d="M30 12 C36 6 44 4 52 4 S66 3 74 4" stroke="#1c1204" stroke-width="8.9"/><path d="M40 9 C48 8 58 9 64 12" stroke="#1c1204" stroke-width="7.9"/><path d="M36 29 C46 31 60 30 76 29" stroke="#1c1204" stroke-width="6.6"/><path d="M70.3 14.5 L71.6 15.1 L72.6 16.0 L73.2 17.1 L73.5 18.4 L73.3 19.6 L72.8 20.7 L72.0 21.5 L71.1 22.1 L70.0 22.2 L69.0 22.1 L68.2 21.7 L67.5 21.0 L67.1 20.3 L67.0 19.4 L67.1 18.7 L67.5 18.0 L68.0 17.5 L68.6 17.3 L69.2 17.2 L69.7 17.3 L70.1 17.6 L70.4 18.0 L70.6 18.4 L70.6 18.8 L70.4 19.1 L70.2 19.3 L70.0 19.4 L69.8 19.4" stroke="#1c1204" stroke-width="6.6"/><path d="M62 6 C60 12 60 22 64 29" stroke="#1c1204" stroke-width="6.6"/><path d="M76 3 C77 10 77 22 76 29" stroke="#1c1204" stroke-width="5.8"/><path d="M24 18 C30 22 38 27 46 27" stroke="#1c1204" stroke-width="6.0"/><path d="M2.4 17.3 L2.1 16.3 L2.1 15.3 L2.4 14.4 L3.0 13.6 L3.7 13.0 L4.5 12.7 L5.4 12.7 L6.2 12.9 L6.8 13.3 L7.3 13.8 L7.7 14.5 L7.7 15.2 L7.6 15.8 L7.4 16.4 L6.9 16.8 L6.5 17.1 L5.9 17.2 L5.4 17.1 L5.0 16.9 L4.7 16.6 L4.5 16.3 L4.4 15.9 L4.4 15.6 L4.6 15.3 L4.8 15.1 L5.0 15.0 L5.2 15.0 L5.4 15.0" stroke="#7c5814" stroke-width="4.2"/><path d="M9.3 14.4 L8.6 13.8 L8.2 13.0 L8.0 12.2 L8.0 11.4 L8.3 10.6 L8.7 9.9 L9.3 9.5 L9.9 9.2 L10.6 9.1 L11.3 9.2 L11.9 9.4 L12.3 9.8 L12.7 10.3 L12.8 10.8 L12.8 11.4 L12.7 11.8 L12.5 12.2 L12.1 12.5 L11.7 12.7 L11.4 12.8 L11.0 12.7 L10.7 12.6 L10.5 12.4 L10.3 12.1 L10.3 11.9 L10.3 11.6 L10.4 11.5 L10.5 11.3" stroke="#7c5814" stroke-width="4.0"/><path d="M16.6 8.4 L16.4 7.2 L16.7 6.0 L17.3 5.0 L18.1 4.2 L19.0 3.8 L20.1 3.6 L21.1 3.8 L21.9 4.2 L22.6 4.8 L23.0 5.6 L23.2 6.5 L23.1 7.3 L22.8 8.0 L22.3 8.5 L21.7 8.9 L21.1 9.0 L20.5 9.0 L19.9 8.7 L19.5 8.4 L19.3 7.9 L19.2 7.5 L19.2 7.1 L19.4 6.7 L19.6 6.5 L19.9 6.3 L20.2 6.3 L20.4 6.4 L20.6 6.5" stroke="#7c5814" stroke-width="4.6"/><path d="M28.2 6.9 L27.9 5.8 L27.9 4.8 L28.3 3.8 L28.8 3.0 L29.6 2.4 L30.5 2.1 L31.4 2.0 L32.2 2.2 L32.9 2.7 L33.4 3.2 L33.8 3.9 L33.9 4.6 L33.7 5.3 L33.4 5.9 L33.0 6.4 L32.5 6.6 L32.0 6.7 L31.4 6.7 L31.0 6.5 L30.7 6.2 L30.4 5.8 L30.4 5.4 L30.4 5.1 L30.6 4.8 L30.8 4.6 L31.0 4.5 L31.2 4.4 L31.4 4.5" stroke="#7c5814" stroke-width="4.4"/><path d="M17.6 22.1 L17.4 23.3 L17.7 24.6 L18.3 25.6 L19.2 26.4 L20.2 26.8 L21.3 26.9 L22.3 26.7 L23.2 26.1 L23.8 25.4 L24.2 24.6 L24.2 23.7 L24.0 22.9 L23.6 22.2 L23.0 21.7 L22.3 21.4 L21.7 21.4 L21.0 21.6 L20.6 21.9 L20.2 22.4 L20.1 22.9 L20.1 23.4 L20.2 23.8 L20.5 24.1 L20.8 24.3 L21.1 24.3 L21.4 24.3 L21.6 24.1 L21.8 23.9" stroke="#7c5814" stroke-width="4.6"/><path d="M29.4 24.2 L29.1 25.2 L29.1 26.3 L29.5 27.3 L30.1 28.0 L30.9 28.6 L31.7 28.8 L32.6 28.8 L33.4 28.6 L34.1 28.1 L34.5 27.4 L34.8 26.7 L34.8 26.0 L34.6 25.4 L34.2 24.8 L33.7 24.5 L33.1 24.3 L32.6 24.3 L32.1 24.4 L31.7 24.7 L31.4 25.1 L31.3 25.5 L31.3 25.9 L31.5 26.2 L31.7 26.5 L31.9 26.6 L32.2 26.7 L32.4 26.6 L32.6 26.5" stroke="#7c5814" stroke-width="4.4"/><path d="M9 17 C16 20 22 15 30 14 S44 20 50 23 S58 22 57 17" stroke="#7c5814" stroke-width="4.8"/><path d="M54.8 19.1 L54.9 17.8 L54.7 16.6 L54.2 15.6 L53.4 14.8 L52.5 14.2 L51.5 13.9 L50.5 13.9 L49.6 14.2 L48.8 14.7 L48.2 15.4 L47.8 16.1 L47.7 16.9 L47.8 17.7 L48.1 18.4 L48.5 18.9 L49.1 19.3 L49.7 19.4 L50.3 19.4 L50.8 19.3 L51.2 19.0 L51.5 18.7 L51.6 18.3 L51.7 17.9 L51.6 17.6 L51.4 17.3 L51.2 17.1 L51.0 17.0 L50.8 17.1" stroke="#7c5814" stroke-width="4.2"/><path d="M30 12 C36 6 44 4 52 4 S66 3 74 4" stroke="#7c5814" stroke-width="6.5"/><path d="M40 9 C48 8 58 9 64 12" stroke="#7c5814" stroke-width="5.5"/><path d="M36 29 C46 31 60 30 76 29" stroke="#7c5814" stroke-width="4.2"/><path d="M70.3 14.5 L71.6 15.1 L72.6 16.0 L73.2 17.1 L73.5 18.4 L73.3 19.6 L72.8 20.7 L72.0 21.5 L71.1 22.1 L70.0 22.2 L69.0 22.1 L68.2 21.7 L67.5 21.0 L67.1 20.3 L67.0 19.4 L67.1 18.7 L67.5 18.0 L68.0 17.5 L68.6 17.3 L69.2 17.2 L69.7 17.3 L70.1 17.6 L70.4 18.0 L70.6 18.4 L70.6 18.8 L70.4 19.1 L70.2 19.3 L70.0 19.4 L69.8 19.4" stroke="#7c5814" stroke-width="4.2"/><path d="M62 6 C60 12 60 22 64 29" stroke="#7c5814" stroke-width="4.2"/><path d="M76 3 C77 10 77 22 76 29" stroke="#7c5814" stroke-width="3.4"/><path d="M24 18 C30 22 38 27 46 27" stroke="#7c5814" stroke-width="3.6"/><path d="M2.4 17.3 L2.1 16.3 L2.1 15.3 L2.4 14.4 L3.0 13.6 L3.7 13.0 L4.5 12.7 L5.4 12.7 L6.2 12.9 L6.8 13.3 L7.3 13.8 L7.7 14.5 L7.7 15.2 L7.6 15.8 L7.4 16.4 L6.9 16.8 L6.5 17.1 L5.9 17.2 L5.4 17.1 L5.0 16.9 L4.7 16.6 L4.5 16.3 L4.4 15.9 L4.4 15.6 L4.6 15.3 L4.8 15.1 L5.0 15.0 L5.2 15.0 L5.4 15.0" stroke="#d0ac48" stroke-width="2.2" transform="translate(-0.3,-0.5)"/><path d="M9.3 14.4 L8.6 13.8 L8.2 13.0 L8.0 12.2 L8.0 11.4 L8.3 10.6 L8.7 9.9 L9.3 9.5 L9.9 9.2 L10.6 9.1 L11.3 9.2 L11.9 9.4 L12.3 9.8 L12.7 10.3 L12.8 10.8 L12.8 11.4 L12.7 11.8 L12.5 12.2 L12.1 12.5 L11.7 12.7 L11.4 12.8 L11.0 12.7 L10.7 12.6 L10.5 12.4 L10.3 12.1 L10.3 11.9 L10.3 11.6 L10.4 11.5 L10.5 11.3" stroke="#d0ac48" stroke-width="2.1" transform="translate(-0.3,-0.5)"/><path d="M16.6 8.4 L16.4 7.2 L16.7 6.0 L17.3 5.0 L18.1 4.2 L19.0 3.8 L20.1 3.6 L21.1 3.8 L21.9 4.2 L22.6 4.8 L23.0 5.6 L23.2 6.5 L23.1 7.3 L22.8 8.0 L22.3 8.5 L21.7 8.9 L21.1 9.0 L20.5 9.0 L19.9 8.7 L19.5 8.4 L19.3 7.9 L19.2 7.5 L19.2 7.1 L19.4 6.7 L19.6 6.5 L19.9 6.3 L20.2 6.3 L20.4 6.4 L20.6 6.5" stroke="#d0ac48" stroke-width="2.4" transform="translate(-0.3,-0.5)"/><path d="M28.2 6.9 L27.9 5.8 L27.9 4.8 L28.3 3.8 L28.8 3.0 L29.6 2.4 L30.5 2.1 L31.4 2.0 L32.2 2.2 L32.9 2.7 L33.4 3.2 L33.8 3.9 L33.9 4.6 L33.7 5.3 L33.4 5.9 L33.0 6.4 L32.5 6.6 L32.0 6.7 L31.4 6.7 L31.0 6.5 L30.7 6.2 L30.4 5.8 L30.4 5.4 L30.4 5.1 L30.6 4.8 L30.8 4.6 L31.0 4.5 L31.2 4.4 L31.4 4.5" stroke="#d0ac48" stroke-width="2.3" transform="translate(-0.3,-0.5)"/><path d="M17.6 22.1 L17.4 23.3 L17.7 24.6 L18.3 25.6 L19.2 26.4 L20.2 26.8 L21.3 26.9 L22.3 26.7 L23.2 26.1 L23.8 25.4 L24.2 24.6 L24.2 23.7 L24.0 22.9 L23.6 22.2 L23.0 21.7 L22.3 21.4 L21.7 21.4 L21.0 21.6 L20.6 21.9 L20.2 22.4 L20.1 22.9 L20.1 23.4 L20.2 23.8 L20.5 24.1 L20.8 24.3 L21.1 24.3 L21.4 24.3 L21.6 24.1 L21.8 23.9" stroke="#d0ac48" stroke-width="2.4" transform="translate(-0.3,-0.5)"/><path d="M29.4 24.2 L29.1 25.2 L29.1 26.3 L29.5 27.3 L30.1 28.0 L30.9 28.6 L31.7 28.8 L32.6 28.8 L33.4 28.6 L34.1 28.1 L34.5 27.4 L34.8 26.7 L34.8 26.0 L34.6 25.4 L34.2 24.8 L33.7 24.5 L33.1 24.3 L32.6 24.3 L32.1 24.4 L31.7 24.7 L31.4 25.1 L31.3 25.5 L31.3 25.9 L31.5 26.2 L31.7 26.5 L31.9 26.6 L32.2 26.7 L32.4 26.6 L32.6 26.5" stroke="#d0ac48" stroke-width="2.3" transform="translate(-0.3,-0.5)"/><path d="M9 17 C16 20 22 15 30 14 S44 20 50 23 S58 22 57 17" stroke="#d0ac48" stroke-width="2.5" transform="translate(-0.3,-0.5)"/><path d="M54.8 19.1 L54.9 17.8 L54.7 16.6 L54.2 15.6 L53.4 14.8 L52.5 14.2 L51.5 13.9 L50.5 13.9 L49.6 14.2 L48.8 14.7 L48.2 15.4 L47.8 16.1 L47.7 16.9 L47.8 17.7 L48.1 18.4 L48.5 18.9 L49.1 19.3 L49.7 19.4 L50.3 19.4 L50.8 19.3 L51.2 19.0 L51.5 18.7 L51.6 18.3 L51.7 17.9 L51.6 17.6 L51.4 17.3 L51.2 17.1 L51.0 17.0 L50.8 17.1" stroke="#d0ac48" stroke-width="2.2" transform="translate(-0.3,-0.5)"/><path d="M30 12 C36 6 44 4 52 4 S66 3 74 4" stroke="#d0ac48" stroke-width="3.4" transform="translate(-0.3,-0.5)"/><path d="M40 9 C48 8 58 9 64 12" stroke="#d0ac48" stroke-width="2.9" transform="translate(-0.3,-0.5)"/><path d="M36 29 C46 31 60 30 76 29" stroke="#d0ac48" stroke-width="2.2" transform="translate(-0.3,-0.5)"/><path d="M70.3 14.5 L71.6 15.1 L72.6 16.0 L73.2 17.1 L73.5 18.4 L73.3 19.6 L72.8 20.7 L72.0 21.5 L71.1 22.1 L70.0 22.2 L69.0 22.1 L68.2 21.7 L67.5 21.0 L67.1 20.3 L67.0 19.4 L67.1 18.7 L67.5 18.0 L68.0 17.5 L68.6 17.3 L69.2 17.2 L69.7 17.3 L70.1 17.6 L70.4 18.0 L70.6 18.4 L70.6 18.8 L70.4 19.1 L70.2 19.3 L70.0 19.4 L69.8 19.4" stroke="#d0ac48" stroke-width="2.2" transform="translate(-0.3,-0.5)"/><path d="M62 6 C60 12 60 22 64 29" stroke="#d0ac48" stroke-width="2.2" transform="translate(-0.3,-0.5)"/><path d="M76 3 C77 10 77 22 76 29" stroke="#d0ac48" stroke-width="1.8" transform="translate(-0.3,-0.5)"/><path d="M24 18 C30 22 38 27 46 27" stroke="#d0ac48" stroke-width="1.9" transform="translate(-0.3,-0.5)"/><path d="M2.4 17.3 L2.1 16.3 L2.1 15.3 L2.4 14.4 L3.0 13.6 L3.7 13.0 L4.5 12.7 L5.4 12.7 L6.2 12.9 L6.8 13.3 L7.3 13.8 L7.7 14.5 L7.7 15.2 L7.6 15.8 L7.4 16.4 L6.9 16.8 L6.5 17.1 L5.9 17.2 L5.4 17.1 L5.0 16.9 L4.7 16.6 L4.5 16.3 L4.4 15.9 L4.4 15.6 L4.6 15.3 L4.8 15.1 L5.0 15.0 L5.2 15.0 L5.4 15.0" stroke="#f6e8a8" stroke-width="1.1" transform="translate(-0.6,-0.9)"/><path d="M9.3 14.4 L8.6 13.8 L8.2 13.0 L8.0 12.2 L8.0 11.4 L8.3 10.6 L8.7 9.9 L9.3 9.5 L9.9 9.2 L10.6 9.1 L11.3 9.2 L11.9 9.4 L12.3 9.8 L12.7 10.3 L12.8 10.8 L12.8 11.4 L12.7 11.8 L12.5 12.2 L12.1 12.5 L11.7 12.7 L11.4 12.8 L11.0 12.7 L10.7 12.6 L10.5 12.4 L10.3 12.1 L10.3 11.9 L10.3 11.6 L10.4 11.5 L10.5 11.3" stroke="#f6e8a8" stroke-width="1.0" transform="translate(-0.6,-0.9)"/><path d="M16.6 8.4 L16.4 7.2 L16.7 6.0 L17.3 5.0 L18.1 4.2 L19.0 3.8 L20.1 3.6 L21.1 3.8 L21.9 4.2 L22.6 4.8 L23.0 5.6 L23.2 6.5 L23.1 7.3 L22.8 8.0 L22.3 8.5 L21.7 8.9 L21.1 9.0 L20.5 9.0 L19.9 8.7 L19.5 8.4 L19.3 7.9 L19.2 7.5 L19.2 7.1 L19.4 6.7 L19.6 6.5 L19.9 6.3 L20.2 6.3 L20.4 6.4 L20.6 6.5" stroke="#f6e8a8" stroke-width="1.2" transform="translate(-0.6,-0.9)"/><path d="M28.2 6.9 L27.9 5.8 L27.9 4.8 L28.3 3.8 L28.8 3.0 L29.6 2.4 L30.5 2.1 L31.4 2.0 L32.2 2.2 L32.9 2.7 L33.4 3.2 L33.8 3.9 L33.9 4.6 L33.7 5.3 L33.4 5.9 L33.0 6.4 L32.5 6.6 L32.0 6.7 L31.4 6.7 L31.0 6.5 L30.7 6.2 L30.4 5.8 L30.4 5.4 L30.4 5.1 L30.6 4.8 L30.8 4.6 L31.0 4.5 L31.2 4.4 L31.4 4.5" stroke="#f6e8a8" stroke-width="1.1" transform="translate(-0.6,-0.9)"/><path d="M17.6 22.1 L17.4 23.3 L17.7 24.6 L18.3 25.6 L19.2 26.4 L20.2 26.8 L21.3 26.9 L22.3 26.7 L23.2 26.1 L23.8 25.4 L24.2 24.6 L24.2 23.7 L24.0 22.9 L23.6 22.2 L23.0 21.7 L22.3 21.4 L21.7 21.4 L21.0 21.6 L20.6 21.9 L20.2 22.4 L20.1 22.9 L20.1 23.4 L20.2 23.8 L20.5 24.1 L20.8 24.3 L21.1 24.3 L21.4 24.3 L21.6 24.1 L21.8 23.9" stroke="#f6e8a8" stroke-width="1.2" transform="translate(-0.6,-0.9)"/><path d="M29.4 24.2 L29.1 25.2 L29.1 26.3 L29.5 27.3 L30.1 28.0 L30.9 28.6 L31.7 28.8 L32.6 28.8 L33.4 28.6 L34.1 28.1 L34.5 27.4 L34.8 26.7 L34.8 26.0 L34.6 25.4 L34.2 24.8 L33.7 24.5 L33.1 24.3 L32.6 24.3 L32.1 24.4 L31.7 24.7 L31.4 25.1 L31.3 25.5 L31.3 25.9 L31.5 26.2 L31.7 26.5 L31.9 26.6 L32.2 26.7 L32.4 26.6 L32.6 26.5" stroke="#f6e8a8" stroke-width="1.1" transform="translate(-0.6,-0.9)"/><path d="M9 17 C16 20 22 15 30 14 S44 20 50 23 S58 22 57 17" stroke="#f6e8a8" stroke-width="1.2" transform="translate(-0.6,-0.9)"/><path d="M54.8 19.1 L54.9 17.8 L54.7 16.6 L54.2 15.6 L53.4 14.8 L52.5 14.2 L51.5 13.9 L50.5 13.9 L49.6 14.2 L48.8 14.7 L48.2 15.4 L47.8 16.1 L47.7 16.9 L47.8 17.7 L48.1 18.4 L48.5 18.9 L49.1 19.3 L49.7 19.4 L50.3 19.4 L50.8 19.3 L51.2 19.0 L51.5 18.7 L51.6 18.3 L51.7 17.9 L51.6 17.6 L51.4 17.3 L51.2 17.1 L51.0 17.0 L50.8 17.1" stroke="#f6e8a8" stroke-width="1.1" transform="translate(-0.6,-0.9)"/><path d="M30 12 C36 6 44 4 52 4 S66 3 74 4" stroke="#f6e8a8" stroke-width="1.7" transform="translate(-0.6,-0.9)"/><path d="M40 9 C48 8 58 9 64 12" stroke="#f6e8a8" stroke-width="1.4" transform="translate(-0.6,-0.9)"/><path d="M36 29 C46 31 60 30 76 29" stroke="#f6e8a8" stroke-width="1.1" transform="translate(-0.6,-0.9)"/><path d="M70.3 14.5 L71.6 15.1 L72.6 16.0 L73.2 17.1 L73.5 18.4 L73.3 19.6 L72.8 20.7 L72.0 21.5 L71.1 22.1 L70.0 22.2 L69.0 22.1 L68.2 21.7 L67.5 21.0 L67.1 20.3 L67.0 19.4 L67.1 18.7 L67.5 18.0 L68.0 17.5 L68.6 17.3 L69.2 17.2 L69.7 17.3 L70.1 17.6 L70.4 18.0 L70.6 18.4 L70.6 18.8 L70.4 19.1 L70.2 19.3 L70.0 19.4 L69.8 19.4" stroke="#f6e8a8" stroke-width="1.1" transform="translate(-0.6,-0.9)"/><path d="M62 6 C60 12 60 22 64 29" stroke="#f6e8a8" stroke-width="1.1" transform="translate(-0.6,-0.9)"/><path d="M76 3 C77 10 77 22 76 29" stroke="#f6e8a8" stroke-width="0.9" transform="translate(-0.6,-0.9)"/><path d="M24 18 C30 22 38 27 46 27" stroke="#f6e8a8" stroke-width="0.9" transform="translate(-0.6,-0.9)"/></g></g></svg>
<svg style="left:234px;top:0px" width="80" height="31" viewBox="0 0 80 31"><use href="#orn" transform="translate(80,0) scale(-1,1)"/></svg>
<div class="t" style="left:43px;top:69px;color:#fff;font-size:12px;font-weight:500">账号<span style="display:inline-block;width:7px;text-align:right">:</span></div>
<div class="t" style="left:43px;top:93px;color:#fff;font-size:12px;font-weight:500">密码<span style="display:inline-block;width:7px;text-align:right">:</span></div>
<div class="a" style="position:absolute;left:272px;top:64px;width:40px;height:24px;background:#dcdadf;border:1px solid #f4f4f4"></div>
<div class="t" style="left:279px;top:69px;color:#8a22cc;font-size:12px">清空</div>
<div class="a" style="position:absolute;left:24px;top:128px;width:272px;height:130px;background:#000;border:2px solid #fff"></div>
<svg style="left:32px;top:144px" width="48" height="56" viewBox="0 0 48 56"><defs><linearGradient id="pbg" x1="0" y1="0" x2="1" y2="0.5"><stop offset="0" stop-color="#c8c8d0"/><stop offset="0.4" stop-color="#a2a2ac"/><stop offset="0.75" stop-color="#b0b0b8"/><stop offset="1" stop-color="#cacace"/></linearGradient><linearGradient id="pbg2" x1="0" y1="0" x2="0" y2="1"><stop offset="0" stop-color="#b4b4bc" stop-opacity="0"/><stop offset="0.55" stop-color="#84848e" stop-opacity="0.55"/><stop offset="1" stop-color="#dcdce0" stop-opacity="0.95"/></linearGradient><filter id="pbl" x="-10%" y="-10%" width="120%" height="120%"><feGaussianBlur stdDeviation="0.9"/></filter><clipPath id="pcl"><rect width="48" height="56"/></clipPath></defs><rect width="48" height="56" fill="url(#pbg)"/><rect width="30" height="56" fill="url(#pbg2)"/><g clip-path="url(#pcl)"><g filter="url(#pbl)"><path d="M5 58C7 50 14 45.500 24 46L34 48 49 50V58z" fill="#463a1e"/><path d="M9 58C11 51 17 48 24 48.500L27 53 25 58z" fill="#6a5a30"/><path d="M42 30L49 28V58H36L40 44z" fill="#4c302c"/><path d="M23 41C25 38 28 37 30 38L39 50 33 51 26 46z" fill="#c8b6b8"/><path d="M27 31C27 25 32 23 37 24 42 25 44 30 43 36 42 42 38 45 34 44 30 42 27 37 27 31z" fill="#94705a"/><path d="M27.500 32C28 36 29 38 31 40L31.500 33z" fill="#b89478"/><path d="M37 25C42 26 44 31 43 36 42 40 40 43 38 44 39 38 39 32 37 25z" fill="#5c4234" opacity="0.8"/><path d="M30 38.500C33 41 38 41 42 37 43 42 40 47 35 47 32 46 30 43 30 38.500z" fill="#33241c"/><path d="M25.500 29C24.500 22.500 29 19 35 19 42 19 47 22.500 47 29 47 35 46 39 44 42 44 34 43 30 41 28 37 27.500 33 27 29.500 28 28.500 29.500 28 31 27.500 33z" fill="#1a1410"/><path d="M29 31l4.500 1M36 31.500l4.500-0.500" stroke="#140e0a" stroke-width="1.400"/><path d="M34 32.500l-1 5 2.500 0.500" stroke="#5a3e2e" stroke-width="0.900" fill="none"/><path d="M33 19C32 14 29 9.500 24 7.500 27 5.500 31 4.500 33 3.500 36 6.500 38 10.500 40 13.500 43 15.500 46 16.500 49 17.500L49 19C44 19 40 18.500 37 19z" fill="#6a523c"/><path d="M26 7.500C30 7.500 33 10.500 35 15.500" stroke="#9c8468" stroke-width="1.400" fill="none"/></g></g></svg>
<div class="t" style="left:33px;top:206px;height:16px;line-height:16px;color:#f4ee6a;font-size:13px;font-weight:400">备注：（欢迎注册幻想三国<span style="display:inline-block;width:13px;text-align:center;font-size:12px;letter-spacing:-1.5px;font-family:Liberation Mono,monospace">OL</span>账号，建议使</div>
<div class="a" style="position:absolute;left:80px;top:64px;width:184px;height:67px;background:#000"></div>
<div class="a" style="position:absolute;left:80px;top:83px;width:184px;height:20px;background:linear-gradient(#ffa02a,#ff8a08 50%,#f67c00)"></div>
<div class="a" style="position:absolute;left:80px;top:122px;width:184px;height:1px;background:#444"></div>
<div class="t" style="left:90px;top:65.5px;color:#fff;font-size:8px;font-weight:500;transform:scaleY(0.72)">测试账号1</div>
<div class="t" style="left:90px;top:85.0px;color:#fff;font-size:8px;font-weight:500;transform:scaleY(0.72)">测试账号2</div>
<div class="t" style="left:90px;top:104.5px;color:#fff;font-size:8px;font-weight:500;transform:scaleY(0.72)">测试账号3</div>
<div class="a gb" style="position:absolute;left:113px;top:304px;width:102px;height:23px;"></div>
<div class="t gt" style="left:113px;width:102px;text-align:center;top:309px;font-size:11.5px;font-weight:400;margin-left:1.5px;transform:scaleX(1.38)">登录游戏</div>
<div class="a" style="position:absolute;left:0px;top:328px;width:320px;height:1px;background:#000010"></div>
<div class="a" style="position:absolute;left:0px;top:329px;width:320px;height:60px;background:linear-gradient(#0a4a50 0,#1c9ca2 6%,#1a959c 18%,#137880 40%,#0e6068 65%,#0c545c 100%);border-top:2px solid #d4c880;border-left:4px solid #b09c50"></div>
<div class="a" style="position:absolute;left:4px;top:331px;width:1px;height:58px;background:#0a3a40"></div>
<div class="a gb" style="position:absolute;left:16px;top:368px;width:63px;height:21px;"></div>
<div class="t gt" style="left:16px;width:63px;text-align:center;top:372px;font-size:9.5px;transform:scaleX(1.02)">返回</div>
<div class="a gb" style="position:absolute;left:225px;top:377px;width:78px;height:20px;"></div>
<div class="t gt" style="left:225px;width:78px;text-align:center;top:381px;font-size:11px;transform:scaleX(1.14)">修改密码</div>
</div>
<div class="a" style="left:242px;top:62px;width:6px;height:6px;background:#aad4cc;box-shadow:0 0 0 1px rgba(40,90,90,0.55)"></div>
<div class="a" style="left:406px;top:62px;width:6px;height:6px;background:#aad4cc;box-shadow:0 0 0 1px rgba(40,90,90,0.55)"></div>
<div class="a" style="left:570px;top:62px;width:6px;height:6px;background:#aad4cc;box-shadow:0 0 0 1px rgba(40,90,90,0.55)"></div>
<div class="a" style="left:242px;top:306px;width:6px;height:6px;background:#aad4cc;box-shadow:0 0 0 1px rgba(40,90,90,0.55)"></div>
<div class="a" style="left:570px;top:306px;width:6px;height:6px;background:#80e008;box-shadow:0 0 0 1px rgba(40,90,90,0.55)"></div>
<div class="a" style="left:240px;top:457px;width:556px;height:17px;background-color:#f2f2f2;background-image:repeating-conic-gradient(#d2d2d2 0 25%,#fcfcfc 0 50%);background-size:2px 2px"></div>
<div class="a" style="left:241px;top:457px;width:16px;height:17px;background:#dcdcdc;border:1px solid #fbfbfb;border-right-color:#4a4a4a;border-bottom-color:#4a4a4a;box-shadow:inset -1px -1px 0 #9a9a9a"></div>
<svg style="left:246px;top:462px" width="5" height="8"><path d="M4.500 0v8L0 4z" fill="#8a8a8a"/></svg>
<div class="a" style="left:240px;top:474px;width:556px;height:30px;background:#f5f4f7"></div>
<div class="a" style="left:240px;top:497px;width:556px;height:7px;background:#e2e0e4"></div>
<div class="a" style="left:240px;top:474px;width:556px;height:1px;background:#9a9a9a"></div>
<div class="a" style="left:310px;top:474px;width:63px;height:20px;background:#f0f0f0;border:1px solid #8a8a8a;border-top:none;border-radius:0 0 3px 3px"></div>
<div class="a" style="left:240px;top:474px;width:71px;height:23px;background:#fff;border:1px solid #8a8a8a;border-top:none;border-radius:0 0 3px 3px"></div>
<div class="t" style="left:266px;top:479px;color:#10206a">设计区</div>
<div class="t" style="left:332px;top:478px">代码区</div>
<svg style="left:247px;top:479px" width="16" height="14" viewBox="0 0 16 14"><rect x="0.5" y="0.5" width="15" height="13" fill="url(#wg)" stroke="#7c8cb0"/><rect x="1" y="1" width="14" height="2.6" fill="url(#tb)"/><path d="M15.5 1V13.5H1" fill="none" stroke="#5a6a94" stroke-width="1"/></svg>
<svg style="left:315px;top:478px" width="12" height="14" viewBox="0 0 12 14"><path d="M0.500 0.500h8l3 3v10h-11z" fill="#fbfcff" stroke="#6a7aa8"/><path d="M8.500 0.500v3h3" fill="#dfe4f4" stroke="#6a7aa8" stroke-width="0.8"/><path d="M2.500 5.500h2M5.500 5.500h3.500M2.500 8h2M5.500 8h3.500M2.500 10.500h2M5.500 10.500h3.500" stroke="#4a5aa8" stroke-width="1"/></svg>
<div class="a" style="left:240px;top:503px;width:560px;height:22px;background:#cccacb;border:1px solid #000;box-shadow:0 0 1px #555"></div>
<div class="t" style="left:246px;top:507px">输出区</div>
<div class="a" style="left:240px;top:525px;width:556px;height:22px;background:#f5f4f7"></div>
<div class="a" style="left:240px;top:546px;width:556px;height:107px;background:#fff;border-top:1px solid #8a8a8a;border-left:1px solid #8a8a8a"></div>
<div class="a" style="left:240px;top:525px;width:82px;height:23px;background:#fff;border:1px solid #8a8a8a;border-bottom:none;border-radius:2px 2px 0 0"></div>
<div class="t" style="left:266px;top:529px;color:#10106a">提示信息</div>
<div class="a" style="left:322px;top:526px;width:75px;height:20px;background:#f0f0f0;border:1px solid #8a8a8a;border-bottom:none;border-radius:2px 2px 0 0"></div>
<div class="t" style="left:343px;top:530px">输出内容</div>
<div class="a" style="left:399px;top:526px;width:83px;height:20px;background:#f0f0f0;border:1px solid #8a8a8a;border-bottom:none;border-radius:2px 2px 0 0"></div>
<div class="t" style="left:422px;top:530px">搜索结果1</div>
<div class="a" style="left:483px;top:526px;width:83px;height:20px;background:#f0f0f0;border:1px solid #8a8a8a;border-bottom:none;border-radius:2px 2px 0 0"></div>
<div class="t" style="left:506px;top:530px">搜索结果2</div>
<div class="a" style="left:567px;top:526px;width:76px;height:20px;background:#f0f0f0;border:1px solid #8a8a8a;border-bottom:none;border-radius:2px 2px 0 0"></div>
<div class="t" style="left:590px;top:530px">加密队列</div>
<svg style="left:247px;top:528.5px" width="16" height="13" viewBox="0 0 16 13"><rect x="3.5" y="0.5" width="12" height="10" fill="#f6f8ff" stroke="#8a98c4"/><rect x="4" y="1" width="11" height="2.2" fill="#5a7ac4"/><path d="M6 5.500h3M10 5.500h3.500M6 8h7.500" stroke="#a8b4d8"/><rect x="0.800" y="2.500" width="2.200" height="6" fill="#d8282a"/><rect x="0.800" y="9.500" width="2.200" height="2.200" fill="#d8282a"/></svg>
<svg style="left:327px;top:530px" width="13" height="13" viewBox="0 0 13 13"><rect x="0.5" y="0.5" width="12" height="12" fill="#f8f9ff" stroke="#7a88b0"/><rect x="1" y="1" width="11" height="1.800" fill="#a8b4dc"/><path d="M3 5h7M3 7.500h7M3 10h7" stroke="#6a7ab0" stroke-width="0.9"/></svg>
<svg style="left:403px;top:528px" width="16" height="16" viewBox="0 0 16 16"><path d="M9.5 9.5l5 5" stroke="#7a5a2a" stroke-width="2.6" stroke-linecap="round"/><path d="M10 10l4.4 4.4" stroke="#d9b268" stroke-width="1.2" stroke-linecap="round"/><circle cx="6.5" cy="6.5" r="5" fill="url(#glass)" stroke="#84a4cc" stroke-width="1.3"/></svg>
<svg style="left:487px;top:528px" width="16" height="16" viewBox="0 0 16 16"><path d="M9.5 9.5l5 5" stroke="#7a5a2a" stroke-width="2.6" stroke-linecap="round"/><path d="M10 10l4.4 4.4" stroke="#d9b268" stroke-width="1.2" stroke-linecap="round"/><circle cx="6.5" cy="6.5" r="5" fill="url(#glass)" stroke="#84a4cc" stroke-width="1.3"/></svg>
<svg style="left:571px;top:528px" width="16" height="16" viewBox="0 0 16 16"><path d="M8 0.800C5.500 2.300 3 2.600 0.800 2.600c0 6 2.500 10.500 7.200 12.600 4.700-2.100 7.200-6.600 7.200-12.600-2.200 0-4.700-0.300-7.200-1.800z" fill="#eef8fb" stroke="#58a8c4" stroke-width="1.2"/><path d="M4.500 6.500l3.500 3.500 3.500-3.500" fill="none" stroke="#5ab8c8" stroke-width="1.500"/></svg>
<div class="t" style="left:241px;top:546px;font-size:12px">类库<span class="m">: E4A</span>核心类库</div>
<div class="t" style="left:241px;top:558px;font-size:12px">注释<span class="m">: </span>本类库是<span class="m">E4A</span>的核心类库，为系统本身和每个子程序提供必需的功能支持。</div>
<div class="t" style="left:241px;top:570px;font-size:12px">版本<span class="m">: 6.7</span></div>
<svg style="left:535px;top:598px" width="250" height="40" viewBox="0 0 250 40"><defs><filter id="wgl" x="-5%" y="-20%" width="110%" height="140%"><feGaussianBlur stdDeviation="1.2"/></filter></defs><text x="8" y="29" font-family="Liberation Sans,Noto Sans CJK SC,sans-serif" font-size="23.5" font-weight="700" fill="none" stroke="#fffbe0" stroke-width="5" stroke-linejoin="round" filter="url(#wgl)" opacity="0.9">图片来源@生活的趣事</text><text x="8" y="29" font-family="Liberation Sans,Noto Sans CJK SC,sans-serif" font-size="23.5" font-weight="700" fill="#ecc94e" stroke="#4a3c12" stroke-width="2.4" stroke-linejoin="round" paint-order="stroke fill">图片来源@生活的趣事</text></svg>
</body></html>
